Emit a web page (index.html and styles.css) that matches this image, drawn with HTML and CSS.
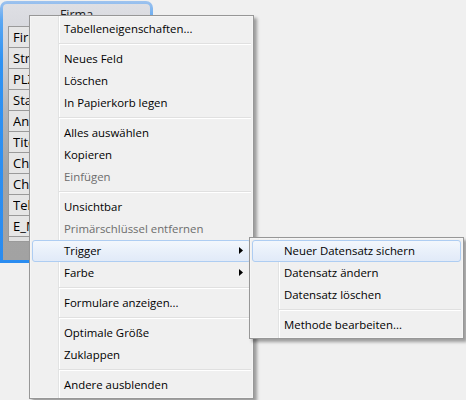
FILE: index.html
```html
<!DOCTYPE html>
<html lang="de">
<head>
<meta charset="utf-8">
<title>Kontextmenü</title>
<link rel="stylesheet" href="styles.css">
</head>
<body>
<div class="desk">
  <div class="tbl">
    <div class="tbl-inner">
      <div class="tbl-title">Firma</div>
      <div class="fields">
        <div class="field"><span class="fname">Firmenname</span></div>
        <div class="field"><span class="fname">Straße</span></div>
        <div class="field"><span class="fname">PLZ</span></div>
        <div class="field"><span class="fname">Stadt</span></div>
        <div class="field"><span class="fname">Anrede</span></div>
        <div class="field"><span class="fname">Titel</span></div>
        <div class="field"><span class="fname">Chef_Vorname</span></div>
        <div class="field"><span class="fname">Chef_Nachname</span></div>
        <div class="field"><span class="fname">Telefon</span></div>
        <div class="field"><span class="fname">E_Mail</span></div>
        <div class="field field-end"></div>
      </div>
    </div>
  </div>

  <div class="menu menu-main">
    <div class="item">Tabelleneigenschaften...</div>
    <div class="sep"></div>
    <div class="item">Neues Feld</div>
    <div class="item">Löschen</div>
    <div class="item">In Papierkorb legen</div>
    <div class="sep"></div>
    <div class="item">Alles auswählen</div>
    <div class="item">Kopieren</div>
    <div class="item disabled">Einfügen</div>
    <div class="sep"></div>
    <div class="item">Unsichtbar</div>
    <div class="item disabled">Primärschlüssel entfernen</div>
    <div class="item active has-sub">Trigger<svg class="arrow" width="4" height="7" viewBox="0 0 4 7"><polygon points="0,0 4,3.5 0,7" fill="#000"/></svg></div>
    <div class="item has-sub">Farbe<svg class="arrow" width="4" height="7" viewBox="0 0 4 7"><polygon points="0,0 4,3.5 0,7" fill="#000"/></svg></div>
    <div class="sep"></div>
    <div class="item">Formulare anzeigen...</div>
    <div class="sep"></div>
    <div class="item">Optimale Größe</div>
    <div class="item">Zuklappen</div>
    <div class="sep"></div>
    <div class="item">Andere ausblenden</div>
  </div>

  <div class="menu menu-sub">
    <div class="item active">Neuer Datensatz sichern</div>
    <div class="item">Datensatz ändern</div>
    <div class="item">Datensatz löschen</div>
    <div class="sep"></div>
    <div class="item">Methode bearbeiten...</div>
  </div>
</div>
</body>
</html>
```

FILE: styles.css
```css
html, body {
  margin: 0;
  padding: 0;
  background: #f0f0f0;
}

.desk {
  position: relative;
  width: 466px;
  height: 400px;
  overflow: hidden;
  background: #f0f0f0;
  font-family: "Open Sans", "Liberation Sans", sans-serif;
}

/* table window */
.tbl {
  position: absolute;
  left: 0;
  top: 1px;
  width: 153px;
  height: 262px;
  box-sizing: border-box;
  padding: 3px;
  border-radius: 7px 7px 0 0;
  background: linear-gradient(to bottom, #9fc3ee 0px, #5aa6f2 20px, #3092f2 60px, #2a8cf0 100%);
}

.tbl-inner {
  height: 100%;
  border-radius: 4px 4px 0 0;
  background: linear-gradient(to bottom, #dedfe4 0px, #d4d5da 40px, #b4b4b6 110px, #a4a4a4 170px, #a2a2a2 100%);
  overflow: hidden;
}

.tbl-title {
  height: 22px;
  line-height: 22px;
  text-align: center;
  font-size: 12.5px;
  color: #222;
}

.fields {
  margin-left: 5px;
  width: 150px;
}

.field {
  height: 20px;
  line-height: 20px;
  border: 1px solid #9a9a9a;
  border-top: none;
  background: #e6e6e6;
  padding-left: 4px;
  font-size: 13px;
  color: #000;
  white-space: nowrap;
}

.fname {
  display: inline-block;
  max-width: 16px;
  overflow: hidden;
  vertical-align: top;
}

.field:first-child {
  border-top: 1px solid #9a9a9a;
}

.field-end {
  height: 4px;
  background: #e0e0e0;
}

/* menus */
.menu {
  position: absolute;
  box-sizing: border-box;
  background: #f0f0f0;
  border: 1px solid #979797;
  padding: 2px;
  box-shadow: inset 0 0 0 1px #f5f5f5, 3px 3px 3px rgba(0, 0, 0, 0.35);
  font-size: 11.4px;
  color: #000;
}

.menu::before {
  content: "";
  position: absolute;
  left: 28px;
  top: 0;
  bottom: 0;
  width: 1px;
  border-right: 1px solid #ffffff;
  background: #e2e3e3;
}

.menu-main {
  left: 29px;
  top: 15px;
  width: 225px;
}

.menu-sub {
  left: 249px;
  top: 237px;
  width: 215px;
}

.item {
  position: relative;
  height: 20px;
  line-height: 20px;
  padding-left: 31px;
  border: 1px solid transparent;
  border-radius: 3px;
  white-space: nowrap;
}

.item.disabled {
  color: #6d6d6d;
}

.item.active {
  border-color: #aecdf2;
  background: linear-gradient(to bottom, #f3f7fc 0%, #e9f0fa 50%, #e1eaf8 100%);
}

.arrow {
  position: absolute;
  right: 7px;
  top: 6px;
}

.sep {
  position: relative;
  height: 8px;
  margin-left: 27px;
}

.sep::after {
  content: "";
  position: absolute;
  left: 0;
  right: 0;
  top: 3px;
  height: 1px;
  background: #e0e0e0;
  border-bottom: 1px solid #ffffff;
}
```
